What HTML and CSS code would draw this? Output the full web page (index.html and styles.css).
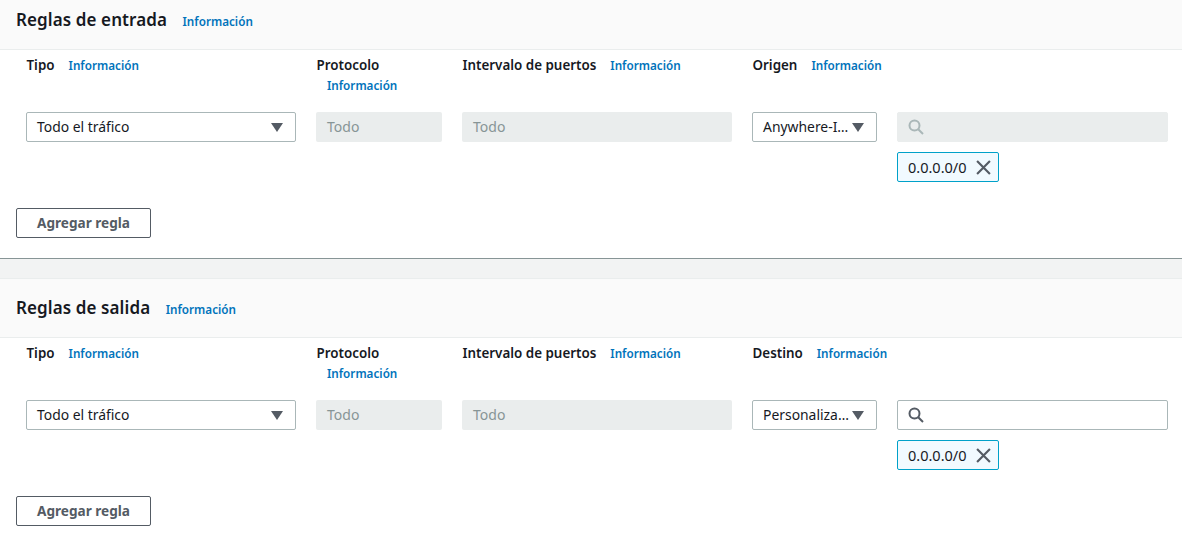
FILE: index.html
```html
<!DOCTYPE html>
<html lang="es">
<head>
<meta charset="utf-8">
<title>Reglas</title>
<link rel="stylesheet" href="styles.css">
</head>
<body>
<section class="panel">
  <header class="panel-head panel-head-cut"><h2>Reglas de entrada</h2><a class="info">Información</a></header>
  <div class="panel-body">
    <div class="rule-grid">
      <div class="label-cell"><span class="label">Tipo</span><a class="info">Información</a></div>
      <div class="label-cell label-wrap"><span class="label">Protocolo</span><a class="info info-wrap">Información</a></div>
      <div class="label-cell"><span class="label">Intervalo de puertos</span><a class="info">Información</a></div>
      <div class="label-cell"><span class="label">Origen</span><a class="info">Información</a></div>
      <div></div>
      <div class="select"><span class="select-text">Todo el tráfico</span><svg class="caret" viewBox="0 0 12 9"><path d="M0 0h12L6 9z"/></svg></div>
      <div class="input-disabled">Todo</div>
      <div class="input-disabled">Todo</div>
      <div class="select"><span class="select-text">Anywhere-I…</span><svg class="caret" viewBox="0 0 12 9"><path d="M0 0h12L6 9z"/></svg></div>
      <div class="search-col">
        <div class="search search-disabled"><svg class="mag" viewBox="0 0 16 16"><circle cx="6.5" cy="6.5" r="5"/><path d="M10.2 10.2L15 15"/></svg></div>
        <div class="tag"><span>0.0.0.0/0</span><svg class="close" viewBox="0 0 14 14"><path d="M1 1l12 12M13 1L1 13"/></svg></div>
      </div>
    </div>
    <button class="add-btn">Agregar regla</button>
  </div>
</section>
<div class="divider"></div>
<section class="panel">
  <header class="panel-head"><h2>Reglas de salida</h2><a class="info">Información</a></header>
  <div class="panel-body">
    <div class="rule-grid">
      <div class="label-cell"><span class="label">Tipo</span><a class="info">Información</a></div>
      <div class="label-cell label-wrap"><span class="label">Protocolo</span><a class="info info-wrap">Información</a></div>
      <div class="label-cell"><span class="label">Intervalo de puertos</span><a class="info">Información</a></div>
      <div class="label-cell"><span class="label">Destino</span><a class="info">Información</a></div>
      <div></div>
      <div class="select"><span class="select-text">Todo el tráfico</span><svg class="caret" viewBox="0 0 12 9"><path d="M0 0h12L6 9z"/></svg></div>
      <div class="input-disabled">Todo</div>
      <div class="input-disabled">Todo</div>
      <div class="select"><span class="select-text">Personaliza…</span><svg class="caret" viewBox="0 0 12 9"><path d="M0 0h12L6 9z"/></svg></div>
      <div class="search-col">
        <div class="search"><svg class="mag" viewBox="0 0 16 16"><circle cx="6.5" cy="6.5" r="5"/><path d="M10.2 10.2L15 15"/></svg></div>
        <div class="tag"><span>0.0.0.0/0</span><svg class="close" viewBox="0 0 14 14"><path d="M1 1l12 12M13 1L1 13"/></svg></div>
      </div>
    </div>
    <button class="add-btn">Agregar regla</button>
  </div>
</section>
</body>
</html>
```
FILE: styles.css
```css
* { box-sizing: border-box; }
html, body { margin: 0; padding: 0; background: #fff; overflow: hidden; }
body { font-family: "Noto Sans", "Open Sans", sans-serif; font-size: 14px; color: #16191f; width: 1182px; height: 537px; }
.panel { background: #fff; }
.panel-head { height: 60px; background: #fafafa; border-top: 1px solid #eaeded; border-bottom: 1px solid #eaeded; display: flex; align-items: center; padding: 0 0 0 16px; gap: 15.5px; }
.panel-head-cut { height: 50px; border-top: 0; padding-bottom: 9px; }
.panel-head h2 { margin: 0; font-size: 17px; font-weight: 600; line-height: 24px; color: #16191f; letter-spacing: 0.1px; }
.panel-head .info { position: relative; top: 1px; }
.info { font-size: 11.7px; font-weight: 600; color: #0073bb; line-height: 18px; white-space: nowrap; }
.panel-body { padding: 5px 0 20px 16px; }
.rule-grid { display: grid; grid-template-columns: 270px 126px 270px 125px 271px; column-gap: 20px; padding-left: 10px; grid-template-rows: 57px auto; }
.label-cell { display: flex; flex-wrap: nowrap; align-content: flex-start; align-items: flex-start; column-gap: 14px; line-height: 20px; }
.label-wrap { flex-wrap: wrap; }
.label { font-size: 13.4px; font-weight: 600; color: #16191f; line-height: 20px; white-space: nowrap; padding-left: 0.5px; }
.info-wrap { margin-left: 11px; }
.label-cell .info { line-height: 20px; }
.select { height: 30px; border: 1px solid #aab7b8; border-radius: 2px; display: flex; align-items: center; justify-content: space-between; padding: 0 12px 0 10px; background: #fff; }
.select-text { font-size: 13.9px; line-height: 28px; white-space: nowrap; color: #16191f; }
.caret { width: 12px; height: 9px; fill: #545b64; flex: none; }
.input-disabled { height: 30px; border-radius: 2px; background: #eaeded; color: #879596; display: flex; align-items: center; padding: 0 0 1px 11px; font-size: 14px; }
.search-col { display: flex; flex-direction: column; align-items: flex-start; gap: 10px; margin-bottom: 26px; }
.search { width: 100%; height: 30px; border: 1px solid #aab7b8; border-radius: 2px; display: flex; align-items: center; padding-left: 10px; background: #fff; }
.search-disabled { background: #eaeded; border-color: #eaeded; }
.mag { width: 16px; height: 16px; fill: none; stroke: #545b64; stroke-width: 2; }
.search-disabled .mag { stroke: #aab7b8; }
.tag { height: 30px; width: 102px; border: 1px solid #00a1c9; border-radius: 2px; background: #f1faff; display: flex; align-items: center; padding-left: 10px; gap: 9px; font-size: 14.5px; }
.close { width: 15px; height: 15px; fill: none; stroke: #545b64; stroke-width: 2; flex: none; }
.add-btn { display: block; width: 135px; height: 30px; border: 1px solid #545b64; border-radius: 2px; background: #fff; color: #545b64; font-family: inherit; font-size: 13.6px; font-weight: 700; padding: 0 0 2px; }
.divider { height: 20px; background: #f2f3f3; border-top: 1px solid #879596; }
```
